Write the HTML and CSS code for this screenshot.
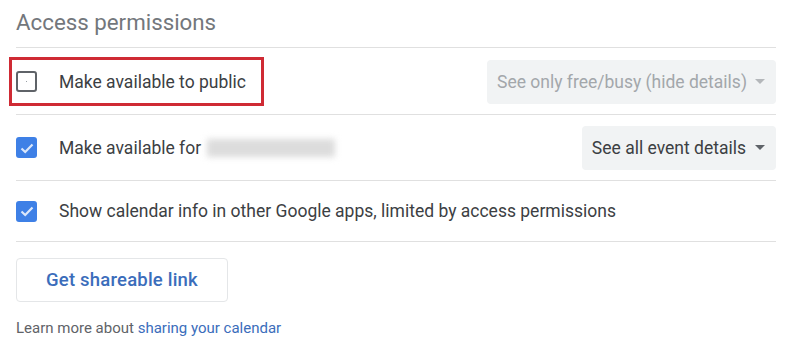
FILE: index.html
```html
<!DOCTYPE html>
<html>
<head>
<meta charset="utf-8">
<link rel="stylesheet" href="styles.css">
</head>
<body>
<div class="panel">
  <h2 class="title">Access permissions</h2>
  <div class="row row1">
    <div class="highlight">
      <span class="cb cb-off"><span class="dot"></span></span>
      <span class="label">Make available to public</span>
    </div>
    <div class="select disabled">See only free/busy (hide details)<span class="caret"></span></div>
  </div>
  <div class="row row2">
    <span class="cb cb-on"><svg viewBox="0 0 20 20" width="20" height="20"><path d="M4.5 10.5 L8.2 14 L15.5 6.5" fill="none" stroke="#dbe7fb" stroke-width="2.2"/></svg></span>
    <span class="label">Make available for</span>
    <span class="blur"></span>
    <div class="select">See all event details<span class="caret dark"></span></div>
  </div>
  <div class="row row3">
    <span class="cb cb-on"><svg viewBox="0 0 20 20" width="20" height="20"><path d="M4.5 10.5 L8.2 14 L15.5 6.5" fill="none" stroke="#dbe7fb" stroke-width="2.2"/></svg></span>
    <span class="label">Show calendar info in other Google apps, limited by access permissions</span>
  </div>
  <button class="share">Get shareable link</button>
  <p class="foot">Learn more about <a href="#">sharing your calendar</a></p>
</div>
</body>
</html>
```
FILE: styles.css
```css
* { box-sizing: border-box; }
html, body { margin: 0; padding: 0; background: #fff; }
body { font-family: Roboto, "Noto Sans", sans-serif; color: #3c4043; }
.panel { width: 800px; padding: 0 24px 0 16px; }
.title {
  margin: 0;
  height: 48px;
  padding-top: 6px;
  font-size: 22.3px;
  font-weight: 400;
  color: #73777c;
  border-bottom: 1px solid #e0e0e0;
  line-height: 32px;
}
.row {
  display: flex;
  align-items: center;
  border-bottom: 1px solid #e0e0e0;
  font-size: 17.5px;
}
.row1 { height: 67px; }
.row2 { height: 66px; }
.row3 { height: 61px; }
.highlight {
  display: flex;
  align-items: center;
  margin-left: -7px;
  padding-left: 7px;
  width: 255px;
  height: 49px;
  border: 3px solid #cf2a34;
  margin-top: 1px;
}
.highlight .cb { margin-left: -3px; }
.cb {
  width: 21px;
  height: 21px;
  border-radius: 3px;
  flex: none;
  display: flex;
  align-items: center;
  justify-content: center;
  margin-right: 22px;
  margin-left: 0;
}
.cb-off { border: 2px solid #5f6368; }
.dot { width: 1px; height: 1px; background: #9aa0a6; }
.cb-on { background: #3e80e6; }
.label { color: #3c4043; }
.blur {
  width: 128px;
  height: 18px;
  margin-left: 6px;
  background: #dcdcdc;
  filter: blur(3px);
}
.select {
  margin-left: auto;
  height: 44px;
  display: flex;
  align-items: center;
  padding: 0 11px 0 10px;
  background: #f1f3f4;
  border-radius: 4px;
  color: #3c4043;
}
.row1 .select { margin-top: 1px; }
.select.disabled { color: #a3a7ab; }
.caret {
  width: 0;
  height: 0;
  margin-left: 8px;
  border-left: 5px solid transparent;
  border-right: 5px solid transparent;
  border-top: 5px solid #b4b7ba;
}
.caret.dark { border-top-color: #5f6368; margin-left: 9px; }
.share {
  display: block;
  margin-top: 16px;
  width: 212px;
  height: 44px;
  background: #fff;
  border: 1px solid #e4e6e8;
  border-radius: 4px;
  font-family: Roboto, "Noto Sans", sans-serif;
  font-size: 18.5px;
  font-weight: 500;
  color: #3b6dbb;
  letter-spacing: 0.2px;
}
.foot {
  margin: 17px 0 0;
  font-size: 15px;
  color: #5f6368;
}
.foot a { color: #3b6dbb; text-decoration: none; }
```
